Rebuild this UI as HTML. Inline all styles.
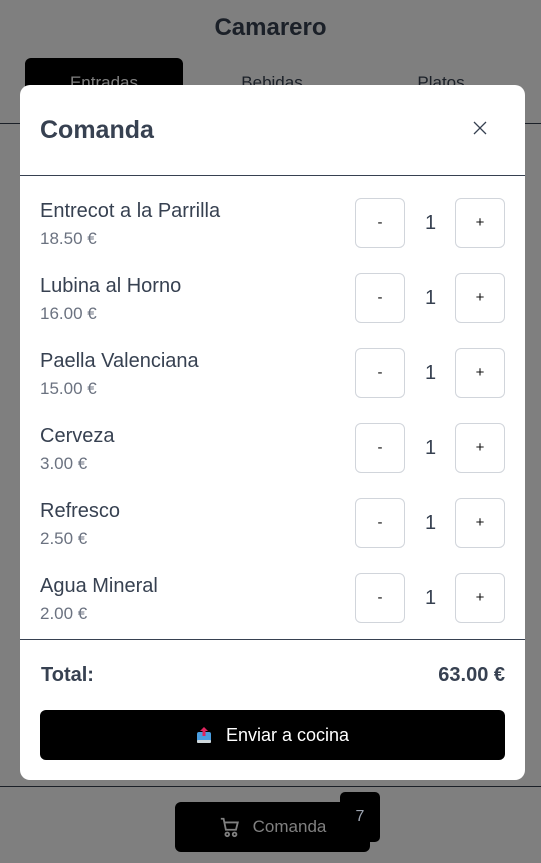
<!DOCTYPE html>
<html><head><meta charset="utf-8"><style>
*{box-sizing:border-box;margin:0;padding:0}
body{width:541px;height:863px;overflow:hidden;font-family:"Liberation Sans",sans-serif;background:#fff;position:relative}
.h1{position:absolute;top:14px;width:100%;text-align:center;font-size:24px;font-weight:bold;color:#374151}
.tab{position:absolute;top:58px;height:50px;width:158px;text-align:center;line-height:50px;font-size:17px;color:#374151}
.line{position:absolute;left:0;width:541px;height:1px;background:#374151}
.ov{position:absolute;inset:0;background:rgba(0,0,0,.5)}
.cmd{position:absolute;left:175px;top:802px;width:195px;height:50px;background:#000;border-radius:6px;color:#808080;font-size:17px;display:flex;align-items:center;justify-content:center;gap:12px}
.badge{position:absolute;left:340px;top:792px;width:40px;height:50px;background:#000;border-radius:5px;color:#9ca3af;font-size:16px;text-align:center;padding-top:16px}
.modal{position:absolute;left:20px;top:85px;width:505px;height:695px;background:#fff;border-radius:10px}
.mt{position:absolute;left:20px;top:31px;font-size:25px;font-weight:bold;color:#374151}
.x{position:absolute;left:453px;top:36px}
.row{position:absolute;left:20px;width:465px;height:50px}
.nm{position:absolute;left:0;top:2px;font-size:20px;color:#374151}
.pr{position:absolute;left:0;top:31px;font-size:17px;color:#6b7280}
.b{position:absolute;top:0;width:50px;height:50px;border:1px solid #d1d5db;border-radius:6px;text-align:center;line-height:48px;font-size:15px;color:#111}
.q{position:absolute;left:385px;top:14px;font-size:20px;color:#374151}
.tot{position:absolute;top:579px;font-size:20px;font-weight:bold;color:#374151}
.send{position:absolute;left:20px;top:625px;width:465px;height:50px;background:#000;border-radius:6px;color:#fff;font-size:18px;display:flex;align-items:center;justify-content:center;gap:14px}
</style></head><body>
<div class="h1">Camarero</div>
<div class="tab" style="left:25px;background:#000;color:#fff;border-radius:6px">Entradas</div>
<div class="tab" style="left:193px">Bebidas</div>
<div class="tab" style="left:362px">Platos</div>
<div class="line" style="top:123px"></div>
<div class="line" style="top:786px"></div>
<div class="ov"></div>
<div class="cmd"><svg width="22" height="22" viewBox="0 0 24 24" fill="none" stroke="#808080" stroke-width="2"><path d="M2 3h3l2.5 12h11l2-8H6.5"/><circle cx="9" cy="20" r="2"/><circle cx="17" cy="20" r="2"/></svg><span>Comanda</span></div>
<div class="badge">7</div>
<div class="modal">
<div class="mt">Comanda</div>
<svg class="x" width="14" height="14" viewBox="0 0 14 14" stroke="#374151" stroke-width="1.3"><path d="M1 1L13 13M13 1L1 13"/></svg>
<div style="position:absolute;left:0;top:90px;width:505px;height:1px;background:#374151"></div>
<div class="row" style="top:113px"><div class="nm">Entrecot a la Parrilla</div><div class="pr">18.50 €</div><div class="b" style="left:315px">-</div><div class="q">1</div><div class="b" style="left:415px">+</div></div>
<div class="row" style="top:188px"><div class="nm">Lubina al Horno</div><div class="pr">16.00 €</div><div class="b" style="left:315px">-</div><div class="q">1</div><div class="b" style="left:415px">+</div></div>
<div class="row" style="top:263px"><div class="nm">Paella Valenciana</div><div class="pr">15.00 €</div><div class="b" style="left:315px">-</div><div class="q">1</div><div class="b" style="left:415px">+</div></div>
<div class="row" style="top:338px"><div class="nm">Cerveza</div><div class="pr">3.00 €</div><div class="b" style="left:315px">-</div><div class="q">1</div><div class="b" style="left:415px">+</div></div>
<div class="row" style="top:413px"><div class="nm">Refresco</div><div class="pr">2.50 €</div><div class="b" style="left:315px">-</div><div class="q">1</div><div class="b" style="left:415px">+</div></div>
<div class="row" style="top:488px"><div class="nm">Agua Mineral</div><div class="pr">2.00 €</div><div class="b" style="left:315px">-</div><div class="q">1</div><div class="b" style="left:415px">+</div></div>
<div style="position:absolute;left:0;top:554px;width:505px;height:1px;background:#374151"></div>
<div class="tot" style="left:21px">Total:</div>
<div class="tot" style="right:20px">63.00 €</div>
<div class="send"><svg width="16" height="18" viewBox="0 0 16 18"><rect x="1" y="6" width="14" height="11" rx="2" fill="#4a9de0"/><rect x="1" y="14" width="14" height="3" rx="1" fill="#cfd8dc"/><path d="M8 1L4 5h2.5v5h3V5H12z" fill="#e0245e"/></svg><span>Enviar a cocina</span></div>
</div>
</body></html>
